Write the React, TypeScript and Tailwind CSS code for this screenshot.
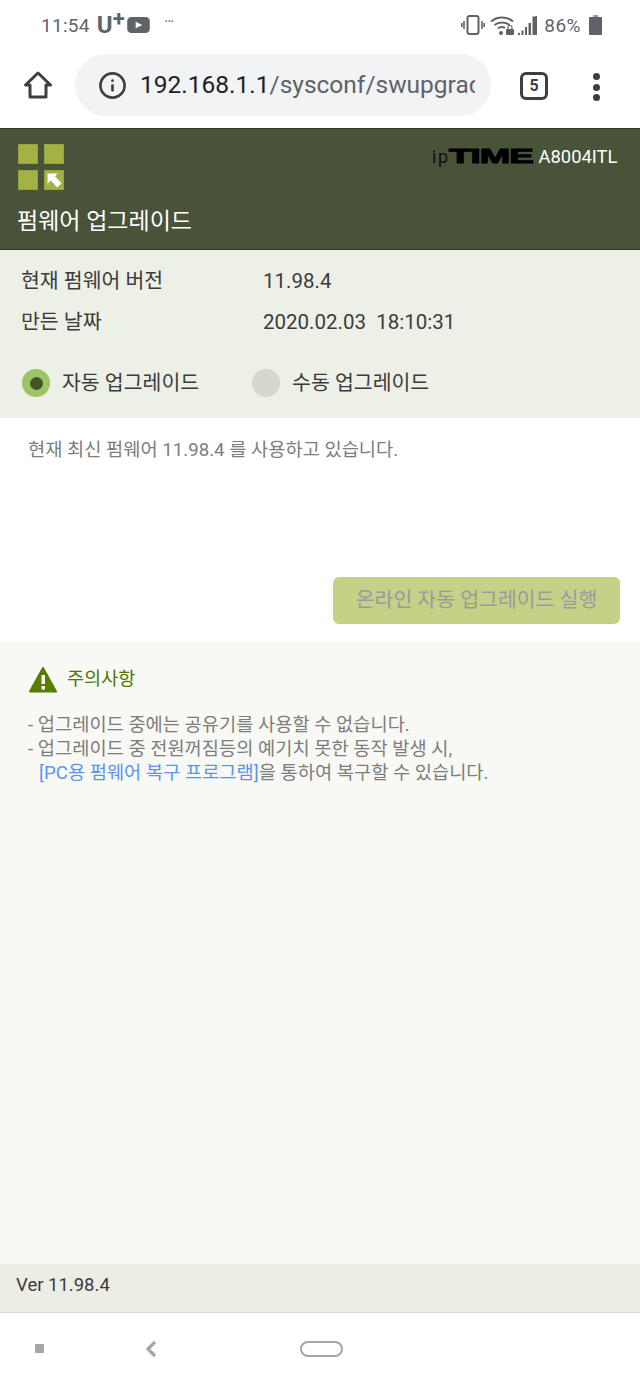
import { Info } from "lucide-react";

const font = "font-['Roboto','Noto_Sans_CJK_KR',sans-serif]";

function StatusBar() {
  return (
    <div className="h-[50px] flex items-center justify-between pl-[41px] pr-[38px] text-[#5f6368] bg-white">
      <div className="flex items-center">
        <span className="text-[19px] leading-none tracking-[0.3px]">11:54</span>
        <span className="ml-[7px] text-[#5f6368] text-[24px] leading-none font-bold">U</span>
        <span className="text-[22px] leading-none font-bold -mt-[13px]">+</span>
        <svg width="23" height="16" viewBox="0 0 24 17" className="ml-[2px]">
          <rect x="0" y="0" width="24" height="17" rx="4.500" fill="#5f6368" />
          <path d="M9 5l7 3.500L9 12z" fill="#fff" />
        </svg>
        <span className="ml-[15px] -mt-[6px] text-[10px] leading-none font-bold">···</span>
      </div>
      <div className="flex items-center">
        <svg width="24" height="20" viewBox="0 0 24 20" fill="none" stroke="#5f6368" strokeWidth="1.600">
          <rect x="6.500" y="1" width="11" height="18" rx="2" strokeWidth="2" />
          <path d="M3 6v8M.8 8v4M21 6v8M23.200 8v4" />
        </svg>
        <svg width="24" height="20" viewBox="0 0 24 20" fill="none" className="ml-[5px]">
          <path d="M1 6.500C7 1 17 1 23 6.500M4.500 10C8.500 6.500 15.500 6.500 19.500 10M8 13.500c2.200-1.800 5-1.800 7-.5" stroke="#5f6368" strokeWidth="2" />
          <circle cx="11" cy="18" r="2" fill="#5f6368" />
          <rect x="16" y="14" width="8" height="6" rx="1" fill="#5f6368" />
          <path d="M18 14v-1.500a2 2 0 0 1 4 0V14" stroke="#5f6368" strokeWidth="1.200" />
        </svg>
        <svg width="20" height="20" viewBox="0 0 20 20" className="ml-[4px]" fill="#5f6368">
          <path d="M0 18.500l2-1v2.500H0zM3.500 15.500h2V20h-2zM7 12h2v8H7zM10.500 8H13v12h-2.500zM14.500 1.500H17.500V20h-3zM17.500 1h1.500v19h-1.500z" />
        </svg>
        <span className="ml-[6px] text-[19px] leading-none tracking-[0.5px]">86%</span>
        <svg width="13" height="20" viewBox="0 0 13 20" className="ml-[8px]">
          <rect x="4" y="0" width="5" height="3" fill="#9a9da1" />
          <rect x="0" y="2" width="13" height="18" rx="1" fill="#5f6368" />
        </svg>
      </div>
    </div>
  );
}

function Toolbar() {
  return (
    <div className="h-[78px] flex items-start bg-white">
      <div className="w-[75px] h-[62px] mt-[4px] flex items-center justify-center shrink-0">
        <svg width="30" height="30" viewBox="0 0 30 30" fill="none" stroke="#3c4043" strokeWidth="3" strokeLinejoin="round">
          <path d="M15 3L2.500 15H7v12h16V15h4.500z" />
        </svg>
      </div>
      <div className="w-[416px] h-[62px] mt-[4px] rounded-full bg-[#f1f3f4] flex items-center pl-[23px] pr-[16px] shrink-0">
        <Info size={29} strokeWidth={2.200} color="#3c4043" className="shrink-0" />
        <div className="ml-[13px] overflow-hidden whitespace-nowrap text-[24.500px] leading-[30px] text-[#5f6368]">
          <span className="text-[#202124]">192.168.1.1</span>/sysconf/swupgrade
        </div>
      </div>
      <div className="ml-[29px] mt-[22px] w-[28px] h-[28px] rounded-[6px] border-[3px] border-[#3c4043] flex items-center justify-center text-[16px] font-bold text-[#3c4043] leading-none shrink-0">
        5
      </div>
      <div className="ml-[45px] mt-[23px] flex flex-col gap-[3.500px] shrink-0">
        <span className="w-[7px] h-[7px] rounded-full bg-[#3c4043]" />
        <span className="w-[7px] h-[7px] rounded-full bg-[#3c4043]" />
        <span className="w-[7px] h-[7px] rounded-full bg-[#3c4043]" />
      </div>
    </div>
  );
}

function Logo() {
  const cell = "w-[20px] h-[20px] bg-[#a3b145] border border-[#94a33d]";
  return (
    <div className="grid grid-cols-[20px_20px] gap-[6px]">
      <div className={cell} />
      <div className={cell} />
      <div className={cell} />
      <div className={`${cell} flex items-center justify-center`}>
        <svg width="15" height="15" viewBox="0 0 14 14">
          <path d="M0.500 0.500H10L7.500 3L13.500 9.500L9.500 13.500L3.500 7L0.500 10z" fill="#fff" />
        </svg>
      </div>
    </div>
  );
}

function Header() {
  return (
    <div className="h-[122px] bg-[#48533a] border-y border-y-[#2f3528] relative pl-[18px] pt-[15px]">
      <Logo />
      <div className="mt-[17px] -ml-[1px] text-[23px] leading-[30px] text-white">펌웨어 업그레이드</div>
      <div className="absolute top-[15px] left-[432px] flex items-baseline whitespace-nowrap leading-[24px]">
        <span className="text-[18px] tracking-[1.500px] text-[#111]">ip</span>
        <span className="w-[89px] text-[20px] font-black text-black origin-left scale-x-[1.830] font-['Liberation_Sans',sans-serif] tracking-[-0.5px] [-webkit-text-stroke:1px_black]">TIME</span>
        <span className="text-[18.400px] text-white">A8004ITL</span>
      </div>
    </div>
  );
}

function InfoRow({ label, value }: { label: string; value: string }) {
  return (
    <div className="flex h-[41px] items-center text-[20.500px] text-[#3c3c3c]">
      <span className="w-[242px]">{label}</span>
      <span className="whitespace-pre">{value}</span>
    </div>
  );
}

function Radio({ label, checked }: { label: string; checked?: boolean }) {
  return (
    <div className="flex items-center">
      <span className={`w-[28px] h-[28px] rounded-full flex items-center justify-center ${checked ? "bg-[#9dc567]" : "bg-[#d6d8d0]"}`}>
        {checked && <span className="w-[13px] h-[13px] rounded-full bg-[#42561f]" />}
      </span>
      <span className="ml-[12px] text-[20.500px] leading-none text-[#3c3c3c]">{label}</span>
    </div>
  );
}

export default function App() {
  return (
    <div className={`w-[640px] h-[1386px] flex flex-col overflow-hidden bg-white ${font}`}>
      <StatusBar />
      <Toolbar />
      <Header />

      <div className="h-[168px] bg-[#edf0e6] pl-[21px] pt-[11px]">
        <InfoRow label="현재 펌웨어 버전" value="11.98.4" />
        <InfoRow label="만든 날짜" value="2020.02.03  18:10:31" />
        <div className="mt-[26px] ml-[1px] flex gap-[53px]">
          <Radio label="자동 업그레이드" checked />
          <Radio label="수동 업그레이드" />
        </div>
      </div>

      <div className="h-[224px] bg-white flex flex-col">
        <p className="pl-[28px] pt-[21px] text-[18.700px] leading-[22px] text-[#7d7d7d]">현재 최신 펌웨어 11.98.4 를 사용하고 있습니다.</p>
        <div className="mt-auto mb-[18px] mr-[20px] self-end w-[287px] h-[47px] rounded-[6px] bg-[#c3d287] flex items-center justify-center text-[20.500px] text-[#9a9aa0]">
          온라인 자동 업그레이드 실행
        </div>
      </div>

      <div className="flex-1 bg-[#f8f9f4] pl-[29px] pt-[24px]">
        <div className="flex items-center h-[28px]">
          <svg width="28" height="26" viewBox="0 0 28 26">
            <path d="M14 1L27 24.500H1z" fill="#567d00" stroke="#567d00" strokeWidth="2" strokeLinejoin="round" />
            <rect x="12.500" y="8" width="3.500" height="9" fill="#fff" />
            <rect x="12.500" y="19" width="3.500" height="3.500" fill="#fff" />
          </svg>
          <span className="ml-[10px] text-[18.600px] text-[#4f7500]">주의사항</span>
        </div>
        <div className="mt-[19px] -ml-[1px] text-[18.700px] leading-[24px] text-[#7d7d7d] whitespace-nowrap">
          <div>- 업그레이드 중에는 공유기를 사용할 수 없습니다.</div>
          <div>- 업그레이드 중 전원꺼짐등의 예기치 못한 동작 발생 시,</div>
          <div className="pl-[11px]">
            <span className="text-[#5a94f2]">[PC용 펌웨어 복구 프로그램]</span>을 통하여 복구할 수 있습니다.
          </div>
        </div>
      </div>

      <div className="h-[49px] bg-[#ecede5] border-b border-b-[#d9d9d9] pl-[16px] pt-[9px] text-[18.500px] leading-[24px] text-[#3c3c3c]">Ver 11.98.4</div>

      <div className="h-[73px] bg-white relative">
        <span className="absolute left-[35px] top-[31px] w-[9px] h-[9px] rounded-[1px] bg-[#a6a6a6]" />
        <svg width="14" height="18" viewBox="0 0 14 18" className="absolute left-[144px] top-[27px]" fill="none" stroke="#a6a6a6" strokeWidth="3.200">
          <path d="M11 2L4 9l7 7" />
        </svg>
        <span className="absolute left-[300px] top-[28px] w-[43px] h-[16px] rounded-full border-[2.500px] border-[#a6a6a6]" />
      </div>
    </div>
  );
}
